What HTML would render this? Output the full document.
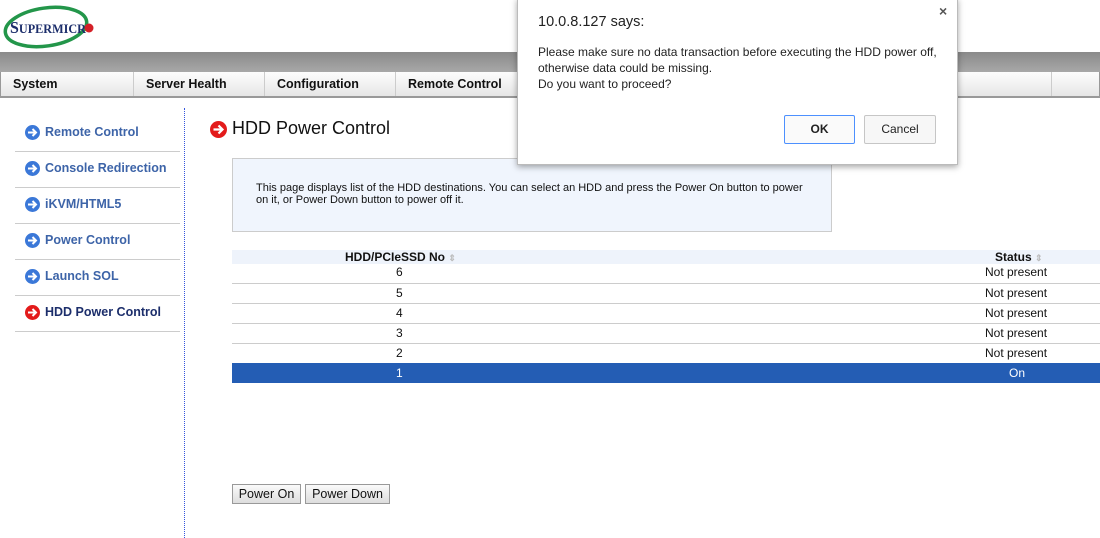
<!DOCTYPE html>
<html><head><meta charset="utf-8"><style>
*{margin:0;padding:0;box-sizing:border-box}
body{width:1100px;height:538px;overflow:hidden;background:#fff;font-family:"Liberation Sans",Arial,sans-serif;position:relative}
.abs{position:absolute}
.nav{top:72px;left:0;width:1100px;height:26px;background:linear-gradient(#fdfdfd,#e6e6e6);border:1px solid #999;border-top:none;border-bottom:2px solid #999}
.nav div{position:absolute;top:0;height:24px;border-right:1px solid #ccc;font-size:12.5px;font-weight:bold;color:#111;padding:5px 0 0 12px}
.side{left:15px;width:165px;height:36px;border-bottom:1px solid #ccc;font-size:12.5px;font-weight:bold;color:#3d64a8}
.side span{position:absolute;left:30px;top:9px}
.ic{position:absolute;left:10px;top:9px;width:15px;height:15px;border-radius:50%;background:#3b78d8}
.ic svg{position:absolute;left:0;top:0}
.red{background:#e31b1b}
.row{left:232px;width:868px;height:20px;border-bottom:1px solid #ccc;font-size:12px;color:#111}
.row span{position:absolute;top:2px}
.btn{top:484px;height:20px;border:1px solid #999;background:linear-gradient(#fafafa,#ddd);font-size:12.5px;padding:2px 0 0;color:#111;white-space:nowrap;text-align:center}
</style></head><body>
<svg class="abs" style="left:3px;top:3px" width="92" height="46" viewBox="0 0 92 46">
<ellipse cx="43" cy="24" rx="41" ry="19" fill="none" stroke="#23964a" stroke-width="3.5" transform="rotate(-8 43 24)"/>
<text x="7" y="30" font-family="Liberation Serif,serif" font-size="17" fill="#1c2e6b" font-weight="bold" textLength="76" lengthAdjust="spacingAndGlyphs">S<tspan font-size="13">UPERMICR</tspan></text>
<circle cx="86" cy="25" r="4.5" fill="#d42027"/>
</svg>
<div class="abs" style="top:52px;left:0;width:1100px;height:20px;background:linear-gradient(#8a8a8a,#a8a8a8)"></div>
<div class="abs nav">
<div style="left:0;width:133px">System</div>
<div style="left:133px;width:131px">Server Health</div>
<div style="left:264px;width:131px">Configuration</div>
<div style="left:395px;width:131px">Remote Control</div>
<div style="left:1050px;width:1px;padding:0"></div>
</div>
<div class="abs side" style="top:116px"><i class="ic"><svg width="15" height="15"><path d="M3 7.5h8M7.5 4l3.5 3.5-3.5 3.5" stroke="#fff" stroke-width="2" fill="none"/></svg></i><span>Remote Control</span></div>
<div class="abs side" style="top:152px"><i class="ic"><svg width="15" height="15"><path d="M3 7.5h8M7.5 4l3.5 3.5-3.5 3.5" stroke="#fff" stroke-width="2" fill="none"/></svg></i><span>Console Redirection</span></div>
<div class="abs side" style="top:188px"><i class="ic"><svg width="15" height="15"><path d="M3 7.5h8M7.5 4l3.5 3.5-3.5 3.5" stroke="#fff" stroke-width="2" fill="none"/></svg></i><span>iKVM/HTML5</span></div>
<div class="abs side" style="top:224px"><i class="ic"><svg width="15" height="15"><path d="M3 7.5h8M7.5 4l3.5 3.5-3.5 3.5" stroke="#fff" stroke-width="2" fill="none"/></svg></i><span>Power Control</span></div>
<div class="abs side" style="top:260px"><i class="ic"><svg width="15" height="15"><path d="M3 7.5h8M7.5 4l3.5 3.5-3.5 3.5" stroke="#fff" stroke-width="2" fill="none"/></svg></i><span>Launch SOL</span></div>
<div class="abs side" style="top:296px;color:#1c2e6b"><i class="ic red"><svg width="15" height="15"><path d="M3 7.5h8M7.5 4l3.5 3.5-3.5 3.5" stroke="#fff" stroke-width="2" fill="none"/></svg></i><span>HDD Power Control</span></div>
<div class="abs" style="left:184px;top:108px;height:430px;border-left:1px dotted #3355dd"></div>
<div class="abs" style="left:210px;top:121px;width:17px;height:17px;border-radius:50%;background:#e31b1b"><svg width="17" height="17"><path d="M3.5 8.5h9M8.5 4.5l4 4-4 4" stroke="#fff" stroke-width="2.2" fill="none"/></svg></div>
<div class="abs" style="left:232px;top:118px;font-size:18px;color:#111">HDD Power Control</div>
<div class="abs" style="left:232px;top:158px;width:600px;height:74px;background:#f0f5fd;border:1px solid #ccc;font-size:11px;color:#111;padding:23px 0 0 23px;line-height:12px">This page displays list of the HDD destinations. You can select an HDD and press the Power On button to power<br>on it, or Power Down button to power off it.</div>
<div class="abs" style="left:232px;top:250px;width:868px;height:14px;background:#eef3fb;font-size:12px;font-weight:bold;color:#111">
<span class="abs" style="left:113px;top:0">HDD/PCIeSSD No <span style="color:#bbb;font-size:9px">&#8661;</span></span>
<span class="abs" style="left:763px;top:0">Status <span style="color:#bbb;font-size:9px">&#8661;</span></span></div>
<div class="abs row" style="top:264px"><span style="left:164px;top:1px">6</span><span style="left:753px;top:1px">Not present</span></div>
<div class="abs row" style="top:284px"><span style="left:164px">5</span><span style="left:753px">Not present</span></div>
<div class="abs row" style="top:304px"><span style="left:164px">4</span><span style="left:753px">Not present</span></div>
<div class="abs row" style="top:324px"><span style="left:164px">3</span><span style="left:753px">Not present</span></div>
<div class="abs row" style="top:344px"><span style="left:164px">2</span><span style="left:753px">Not present</span></div>
<div class="abs row" style="top:363px;height:20px;background:#245db4;color:#fff;border:none"><span style="left:164px;top:3px">1</span><span style="left:777px;top:3px">On</span></div>
<div class="abs btn" style="left:232px;width:69px">Power On</div>
<div class="abs btn" style="left:305px;width:85px">Power Down</div>
<div class="abs" style="left:517px;top:-2px;width:441px;height:167px;background:#fff;border:1px solid #bbb;box-shadow:0 2px 6px rgba(0,0,0,.35)">
<div class="abs" style="left:20px;top:15px;font-size:14.5px;color:#222">10.0.8.127 says:</div>
<div class="abs" style="left:421px;top:4px;font-size:14px;color:#555;font-weight:bold">×</div>
<div class="abs" style="left:20px;top:45px;font-size:12px;color:#222;line-height:16px">Please make sure no data transaction before executing the HDD power off,<br>otherwise data could be missing.<br>Do you want to proceed?</div>
<div class="abs" style="left:266px;top:116px;width:71px;height:29px;border:1px solid #4d90fe;border-radius:2px;background:#fafafa;font-size:12px;font-weight:bold;text-align:center;line-height:27px;color:#222">OK</div>
<div class="abs" style="left:346px;top:116px;width:72px;height:29px;border:1px solid #c6c6c6;border-radius:2px;background:#f7f7f7;font-size:12px;text-align:center;line-height:27px;color:#222">Cancel</div>
</div>
</body></html>
